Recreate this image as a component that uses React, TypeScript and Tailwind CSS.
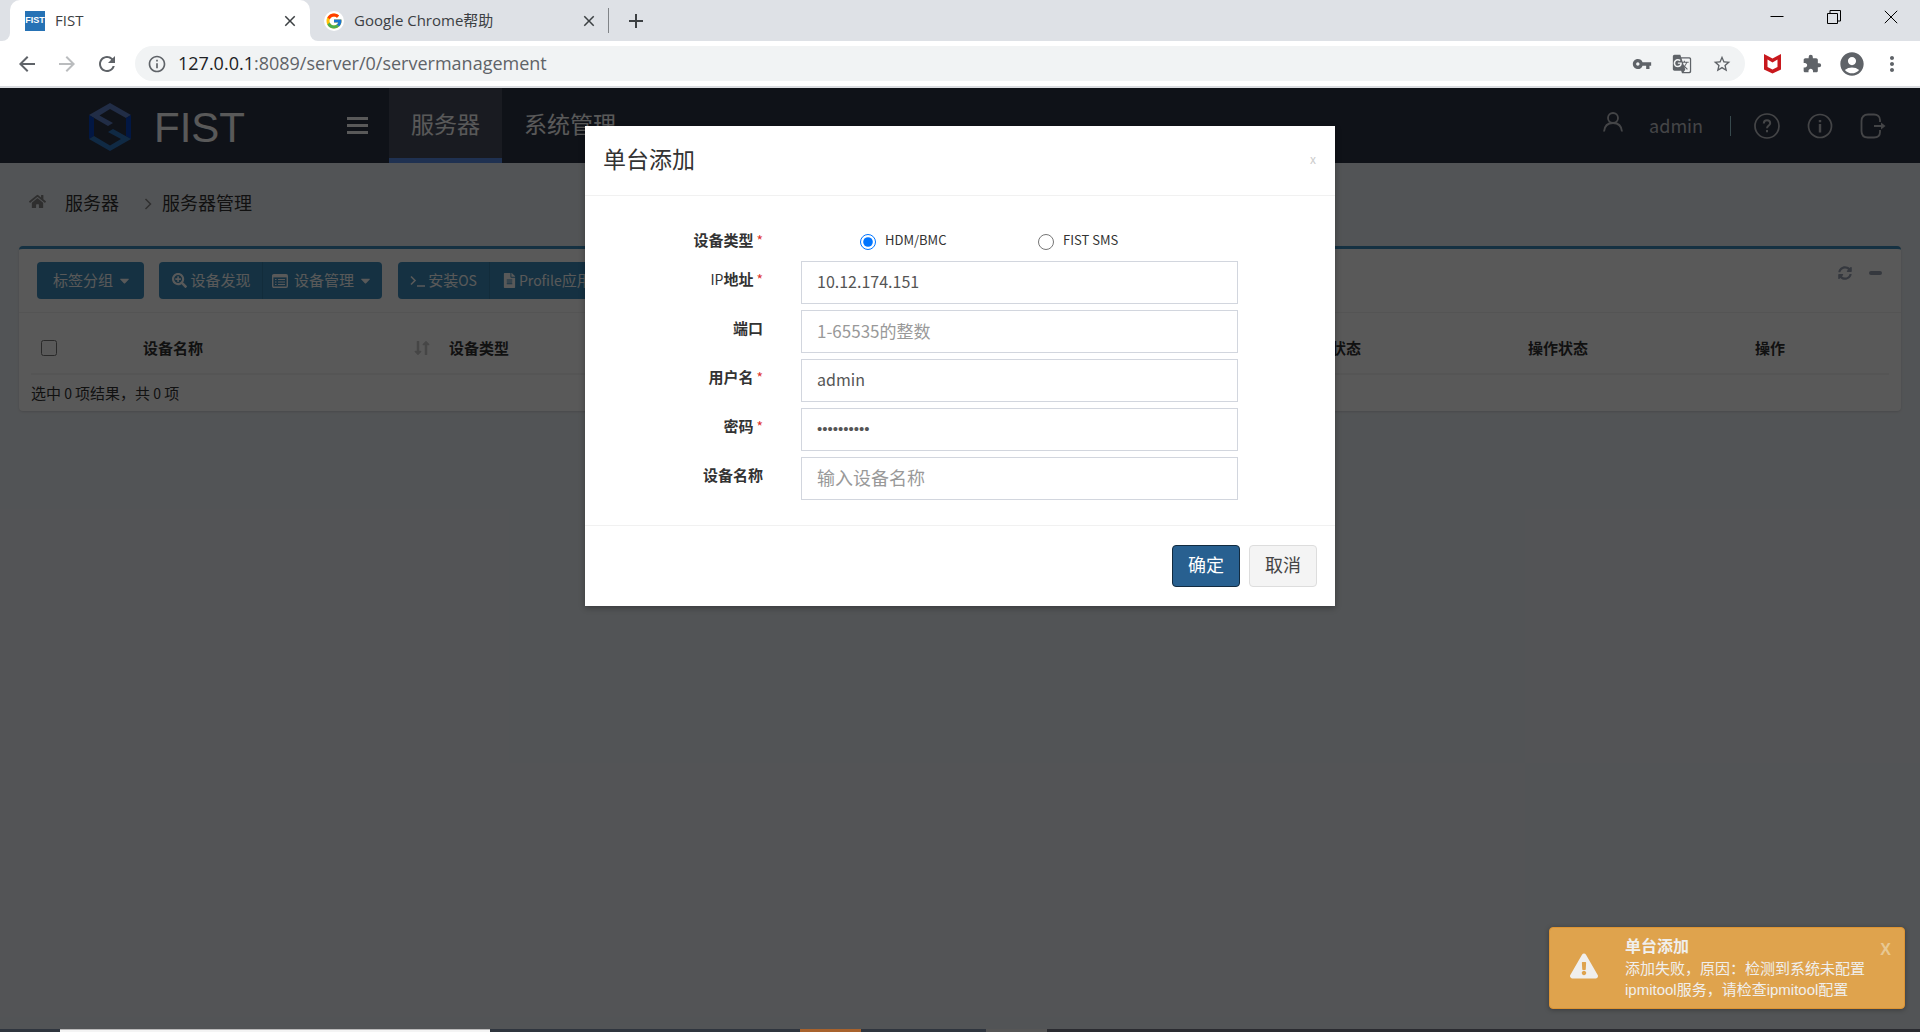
import type { ReactNode } from "react";
import {
  FaCaretDown,
  FaExclamationTriangle,
  FaFileAlt,
  FaHome,
  FaLongArrowAltDown,
  FaLongArrowAltUp,
  FaSearchPlus,
  FaSyncAlt,
} from "react-icons/fa";
import { FcGoogle } from "react-icons/fc";
import {
  MdAccountCircle,
  MdAdd,
  MdArrowBack,
  MdArrowForward,
  MdClose,
  MdExtension,
  MdGTranslate,
  MdInfoOutline,
  MdMoreVert,
  MdRefresh,
  MdStarBorder,
  MdVpnKey,
} from "react-icons/md";

function ChromeTabs() {
  return (
    <div className="flex h-[41px] items-stretch bg-[#dee1e6] text-[15px] text-[#3c4043]">
      <div className="w-[10px] bg-white">
        <div className="h-full rounded-br-[8px] bg-[#dee1e6]" />
      </div>
      <div className="flex w-[300px] items-center rounded-t-[10px] bg-white pl-[15px] pr-[11px]">
        <span className="flex size-5 items-center justify-center bg-[#2672b5] font-['Liberation_Sans'] text-[9px] font-bold text-white">
          FIST
        </span>
        <span className="ml-[10px] flex-1">FIST</span>
        <button aria-label="关闭标签页" className="text-[18px]">
          <MdClose />
        </button>
      </div>
      <div className="bg-white">
        <div className="flex h-full w-[298px] items-center rounded-bl-[8px] bg-[#dee1e6] pl-[14px] pr-[10px]">
          <span className="flex size-5 items-center justify-center rounded-full bg-white text-[18px]">
            <FcGoogle />
          </span>
          <span className="ml-[10px] flex-1">Google Chrome帮助</span>
          <button aria-label="关闭标签页" className="text-[18px]">
            <MdClose />
          </button>
        </div>
      </div>
      <div className="my-2 w-px bg-[#808387]" />
      <button aria-label="新标签页" className="ml-[15px] text-[24px]">
        <MdAdd />
      </button>
      <div className="ml-auto flex h-[34px] pr-px text-black">
        <button aria-label="最小化" className="flex w-[57px] items-center justify-center">
          <svg width="14" height="14" viewBox="0 0 14 14" stroke="currentColor">
            <path d="M.5 6.500h13" />
          </svg>
        </button>
        <button aria-label="还原" className="flex w-[57px] items-center justify-center">
          <svg width="14" height="14" viewBox="0 0 14 14" fill="none" stroke="currentColor">
            <path d="M.5 3.500h10v10h-10zM3 3.500v-3h10.500v10.500h-3" />
          </svg>
        </button>
        <button aria-label="关闭" className="flex w-[57px] items-center justify-center">
          <svg width="14" height="14" viewBox="0 0 14 14" stroke="currentColor">
            <path d="M.8.8l12.400 12.400M13.200.8L.8 13.200" />
          </svg>
        </button>
      </div>
    </div>
  );
}

function AddressBar() {
  return (
    <div className="flex h-[47px] items-center border-b-2 border-[#dadce0] bg-white pl-[15px] pr-4 text-[#5f6368]">
      <div className="flex gap-4 text-[24px]">
        <button aria-label="后退">
          <MdArrowBack />
        </button>
        <button aria-label="前进" className="text-[#babcbe]">
          <MdArrowForward />
        </button>
        <button aria-label="重新加载">
          <MdRefresh />
        </button>
      </div>
      <div className="ml-4 flex h-[35px] flex-1 items-center rounded-full bg-[#f1f3f4] pl-3 pr-[13px] text-[20px]">
        <MdInfoOutline />
        <div className="relative ml-[11px] flex-1 text-[18px]">
          <div aria-hidden="true" className="leading-[27px]">
            <span className="text-[#202124]">127.0.0.1</span>:8089/server/0/servermanagement
          </div>
          <input
            aria-label="地址"
            defaultValue="127.0.0.1:8089/server/0/servermanagement"
            className="absolute inset-0 w-full bg-transparent text-transparent outline-none"
          />
        </div>
        <div className="flex gap-5">
          <button aria-label="密码">
            <MdVpnKey />
          </button>
          <button aria-label="翻译此页">
            <MdGTranslate />
          </button>
          <button aria-label="收藏">
            <MdStarBorder />
          </button>
        </div>
      </div>
      <div className="ml-[18px] flex items-center">
        <button aria-label="McAfee">
          <svg width="19" height="20" viewBox="0 0 19 20">
            <path
              d="M1 0L9.500 4.500L18 0V15.500L9.500 19.500L1 15.500ZM4.500 5.500V13L9.500 15.500L14.500 13V5.500L9.500 8.500Z"
              fill="#c8181d"
              fillRule="evenodd"
            />
          </svg>
        </button>
        <button aria-label="扩展程序" className="ml-5 text-[20px]">
          <MdExtension />
        </button>
        <button aria-label="用户" className="ml-4 text-[28px]">
          <MdAccountCircle />
        </button>
        <button aria-label="更多" className="ml-[14px] text-[24px]">
          <MdMoreVert />
        </button>
      </div>
    </div>
  );
}

function Logo() {
  return (
    <a href="#" className="flex items-center text-white">
      <svg width="42" height="50" viewBox="0 0 42 50" className="mt-1">
        <path d="M0 12L21 0L42 12L37 15L21 6L10.500 12.500L24 20L19 23Z" fill="#5f80c8" />
        <path d="M0 12L5 15V33L0 36Z" fill="#0644c0" />
        <path d="M42 12L37 15V33L42 36Z" fill="#0644c0" />
        <path d="M0 36L21 48L42 36L24 26L19 29L32 36L21 42.500L5 33Z" fill="#2f78c4" />
      </svg>
      <span className="ml-[23px] mt-[5px] font-['Liberation_Sans'] text-[42px] leading-[50px]">FIST</span>
    </a>
  );
}

function Header() {
  return (
    <header className="flex h-[75px] items-stretch bg-[#2d3446] pl-[89px] pr-[34px] text-white">
      <div className="flex w-[300px] items-center">
        <Logo />
        <button aria-label="菜单" className="ml-auto mr-[21px] flex flex-col gap-1">
          <span className="h-[3px] w-[21px] bg-white" />
          <span className="h-[3px] w-[21px] bg-white" />
          <span className="h-[3px] w-[21px] bg-white" />
        </button>
      </div>
      <nav className="flex text-[23px]">
        <a
          href="#"
          className="flex w-[113px] items-center justify-center border-b-[5px] border-[#5a8ce8] bg-[#494f60] pt-[1px]"
        >
          服务器
        </a>
        <a href="#" className="flex items-center px-[22px] pb-1">
          系统管理
        </a>
      </nav>
      <div className="ml-auto flex items-center text-[#c4c6cb]">
        <svg width="20" height="20" viewBox="0 0 20 20" fill="none" stroke="currentColor" strokeWidth="1.800" className="mb-2">
          <circle cx="10" cy="6" r="5" />
          <path d="M1 19.500C1.500 14 5 11 10 11S18.500 14 19 19.500" />
        </svg>
        <span className="ml-[26px] text-[18px]">admin</span>
        <span className="ml-[27px] h-5 w-px bg-[#9fd0dc]" />
        <button aria-label="帮助" className="ml-[23px]">
          <svg width="26" height="26" viewBox="0 0 26 26" fill="none" stroke="currentColor" strokeWidth="1.700">
            <circle cx="13" cy="13" r="12" />
            <path d="M9.800 10.500C9.800 6 16.200 6.300 16.200 10.200C16.200 12.500 13 12.500 13 15.200M13 17v2.200" strokeWidth="2" />
          </svg>
        </button>
        <button aria-label="关于" className="ml-[27px]">
          <svg width="26" height="26" viewBox="0 0 26 26" fill="none" stroke="currentColor" strokeWidth="1.700">
            <circle cx="13" cy="13" r="11.500" />
            <path d="M13 7v2.200M13 11v8.500" strokeWidth="2.400" />
          </svg>
        </button>
        <button aria-label="退出" className="ml-[27px]">
          <svg width="26" height="26" viewBox="0 0 26 26" fill="none" stroke="currentColor" strokeWidth="1.800">
            <path d="M20 9V7C20 3.500 17.500 1.500 14 1.500H8C4 1.500 1.500 4 1.500 8V18C1.500 22 4 24.500 8 24.500H14C17.500 24.500 20 22.500 20 19V17M14 13h9" />
            <path d="M21 9.500L25.500 13L21 16.500Z" fill="currentColor" stroke="none" />
          </svg>
        </button>
      </div>
    </header>
  );
}

const toolButton = "flex items-center justify-center";

function ServerCard() {
  return (
    <section className="mx-[19px] mt-[30px] rounded-[4px] border-t-[3px] border-[#3c8dbc] bg-white text-[15px] text-[#333] shadow-sm">
      <div className="flex items-start border-b border-[#f0f0f0] px-[18px] pb-[13px] pt-[13px] text-white">
        <div className="flex h-[37px] w-[107px] rounded-[4px] bg-[#3c8dbc]">
          <button className={`${toolButton} w-full gap-1 pl-1`}>
            标签分组 <FaCaretDown />
          </button>
        </div>
        <div className="ml-[15px] flex h-[37px] rounded-[4px] bg-[#3c8dbc]">
          <button className={`${toolButton} w-[104px] gap-[3px] border-r border-[#367fa9] pl-[2px]`}>
            <FaSearchPlus /> 设备发现
          </button>
          <button className={`${toolButton} w-[119px] gap-1`}>
            <svg width="16" height="14" viewBox="0 0 16 14" fill="none" stroke="currentColor" className="mr-[2px]">
              <rect x=".7" y=".7" width="14.600" height="12.600" rx="1.200" strokeWidth="1.400" />
              <path d="M1 2.200h14" strokeWidth="2.400" />
              <path d="M3 5.500h1.500M6 5.500h7M3 8h1.500M6 8h7M3 10.500h1.500M6 10.500h7" strokeWidth="1.200" />
            </svg>
            设备管理 <FaCaretDown />
          </button>
        </div>
        <div className="ml-[16px] flex h-[37px] rounded-[4px] bg-[#3c8dbc]">
          <button className={`${toolButton} w-[92px] gap-[3px] border-r border-[#367fa9]`}>
            <svg width="15" height="14" viewBox="0 0 15 14" fill="none" stroke="currentColor" strokeWidth="1.600">
              <path d="M1 2.500L5 6.500L1 10.500M7 12h8" />
            </svg>
            <span>
              安装<span className="text-[14px]">OS</span>
            </span>
          </button>
          <button className={`${toolButton} gap-[2px] px-3`}>
            <FaFileAlt />
            <span>
              <span className="text-[14px]">Profile</span>应用
            </span>
          </button>
        </div>
        <div className="ml-auto mt-px flex items-center gap-[17px] pr-px text-[#97a0b3]">
          <button aria-label="刷新" className="text-[14px]">
            <FaSyncAlt />
          </button>
          <button aria-label="折叠" className="flex h-5 items-center">
            <span className="h-1 w-[13px] rounded-sm bg-[#97a0b3]" />
          </button>
        </div>
      </div>
      <div className="px-3 pt-[10px]">
        <table className="w-full table-fixed border-b-2 border-[#f4f4f4] text-left">
          <thead>
            <tr className="h-[51px]">
              <th className="w-[112px] pl-[10px]">
                <input type="checkbox" aria-label="全选" className="block size-4" />
              </th>
              <th className="w-[306px]">
                <div className="flex items-center justify-between pr-[15px]">
                  设备名称
                  <span className="flex text-[16px] text-[#c8c8c8]">
                    <FaLongArrowAltDown className="-mr-2" />
                    <FaLongArrowAltUp />
                  </span>
                </div>
              </th>
              <th className="w-[426px]">设备类型</th>
              <th className="w-[426px]">IP地址</th>
              <th className="w-[227px]">健康状态</th>
              <th className="w-[227px]">操作状态</th>
              <th>操作</th>
            </tr>
          </thead>
        </table>
        <p className="py-[7px] leading-[21px]">
          选中<span className="text-[14px]"> 0 </span>项结果，共<span className="text-[14px]"> 0 </span>项
        </p>
      </div>
    </section>
  );
}

function FormRow({ id, label, required, children }: { id: string; label: ReactNode; required?: boolean; children: ReactNode }) {
  return (
    <div className="mb-[6px] grid grid-cols-[178px_437px] items-center gap-x-[38px]">
      <label htmlFor={id} className="mb-[7px] text-right text-[15px] font-bold leading-[22px]">
        {label}
        {required && <Star />}
      </label>
      {children}
    </div>
  );
}

function Star() {
  return <span className="ml-[3px] text-[14px] font-normal text-[#e0332e]">*</span>;
}

const fieldBox =
  "h-[43px] w-full border border-[#d2d6de] bg-white px-[15px] pb-[3px] text-[#555] outline-none placeholder:text-[#999]";

function AddDialog() {
  return (
    <div
      role="dialog"
      aria-modal="true"
      aria-labelledby="dialog-title"
      className="w-[750px] bg-white text-[#333] shadow-[0_2px_6px_rgba(0,0,0,0.3)]"
    >
      <div className="flex h-[70px] items-center border-b border-[#f1f1f1] px-[18px] pb-1">
        <h2 id="dialog-title" className="text-[23px]">
          单台添加
        </h2>
        <button aria-label="关闭" className="ml-auto pr-px text-[12px] text-[#ccc]">
          x
        </button>
      </div>
      <form className="pb-[19px] pt-[22px]">
        <div
          role="radiogroup"
          aria-labelledby="type-label"
          className="grid h-[43px] grid-cols-[178px_437px] items-center gap-x-[38px]"
        >
          <span id="type-label" className="text-right text-[15px] font-bold leading-[22px]">
            设备类型
            <Star />
          </span>
          <div className="flex pl-[59px] text-[13px]">
            <label className="flex w-[178px] items-center gap-[9px]">
              <input type="radio" name="type" defaultChecked className="mt-1 size-4 accent-[#0075ff]" />
              HDM/BMC
            </label>
            <label className="flex items-center gap-[9px]">
              <input type="radio" name="type" className="mt-1 size-4" />
              FIST SMS
            </label>
          </div>
        </div>
        <FormRow id="ip" required label={<><span className="text-[14px] font-normal">IP</span>地址</>}>
          <input id="ip" defaultValue="10.12.174.151" className={`${fieldBox} text-[16px]`} />
        </FormRow>
        <FormRow id="port" label="端口">
          <input id="port" placeholder="1-65535的整数" className={`${fieldBox} text-[17px]`} />
        </FormRow>
        <FormRow id="user" required label="用户名">
          <input id="user" defaultValue="admin" className={`${fieldBox} text-[16px]`} />
        </FormRow>
        <FormRow id="password" required label="密码">
          <input
            id="password"
            type="password"
            defaultValue="Password@1"
            className={`${fieldBox} pb-0 font-['Liberation_Sans'] text-[15px]`}
          />
        </FormRow>
        <FormRow id="name" label="设备名称">
          <input id="name" placeholder="输入设备名称" className={`${fieldBox} text-[18px]`} />
        </FormRow>
      </form>
      <div className="flex justify-end gap-[9px] border-t border-[#f1f1f1] px-[18px] py-[19px] text-[18px]">
        <button className="h-[42px] w-[68px] rounded-[4px] border border-[#122b40] bg-[#286090] pb-1 text-white">
          确定
        </button>
        <button className="h-[42px] w-[68px] rounded-[4px] border border-[#ddd] bg-[#f4f4f4] pb-1 text-[#444]">
          取消
        </button>
      </div>
    </div>
  );
}

function Toast() {
  return (
    <div
      role="alert"
      className="absolute bottom-[20px] right-[15px] flex w-[356px] rounded-[4px] border border-[#dd9433] bg-[#dfa34d] pb-[8px] pl-[20px] pr-[13px] pt-[8px] font-['Liberation_Sans','Noto_Sans_CJK_SC',sans-serif] text-[#f0efed] shadow-[0_1px_5px_rgba(0,0,0,0.3)]"
    >
      <FaExclamationTriangle className="mt-[16px] text-[28px]" />
      <div className="ml-[27px] w-[245px] text-[15px] leading-[21px]">
        <p className="mb-px text-[16px] font-bold">单台添加</p>
        <p>添加失败，原因：检测到系统未配置ipmitool服务，请检查ipmitool配置</p>
      </div>
      <button aria-label="关闭" className="ml-auto mt-1 self-start text-[16px] font-bold leading-[20px] text-[#e8c893]">
        X
      </button>
    </div>
  );
}

function Taskbar() {
  return (
    <div className="flex h-[3px] bg-[#2f353e]">
      <div className="ml-[60px] w-[430px] border-t border-[#bbb] bg-[#f4f4f4]" />
      <div className="ml-[310px] w-[61px] bg-[#a8622c]" />
      <div className="ml-[125px] w-[61px] bg-[#565656]" />
      <div className="flex-1 bg-[#2a2b30]" />
    </div>
  );
}

export default function App() {
  return (
    <div className="flex h-screen min-w-[1200px] flex-col overflow-hidden font-['Noto_Sans_CJK_SC',sans-serif]">
      <div className="font-['Open_Sans','Noto_Sans_CJK_SC',sans-serif]">
        <ChromeTabs />
        <AddressBar />
      </div>
      <main className="relative min-h-0 flex-1 overflow-hidden bg-[#ecf0f5]">
        <Header />
        <nav aria-label="breadcrumb" className="flex h-[53px] items-end pl-[29px] text-[18px] leading-[27px] text-[#333]">
          <FaHome className="mb-[6px] text-[17px] text-[#888]" />
          <a href="#" className="ml-[19px]">
            服务器
          </a>
          <svg width="8" height="12" viewBox="0 0 8 12" fill="none" stroke="#888" strokeWidth="1.500" className="mb-[6px] ml-[25px] mr-[10px]">
            <path d="M1.500 1L6.500 6L1.500 11" />
          </svg>
          <a href="#">服务器管理</a>
        </nav>
        <ServerCard />
        <div className="absolute inset-0 flex items-start justify-center bg-black/65 pt-[38px]">
          <AddDialog />
        </div>
        <Toast />
      </main>
      <Taskbar />
    </div>
  );
}
